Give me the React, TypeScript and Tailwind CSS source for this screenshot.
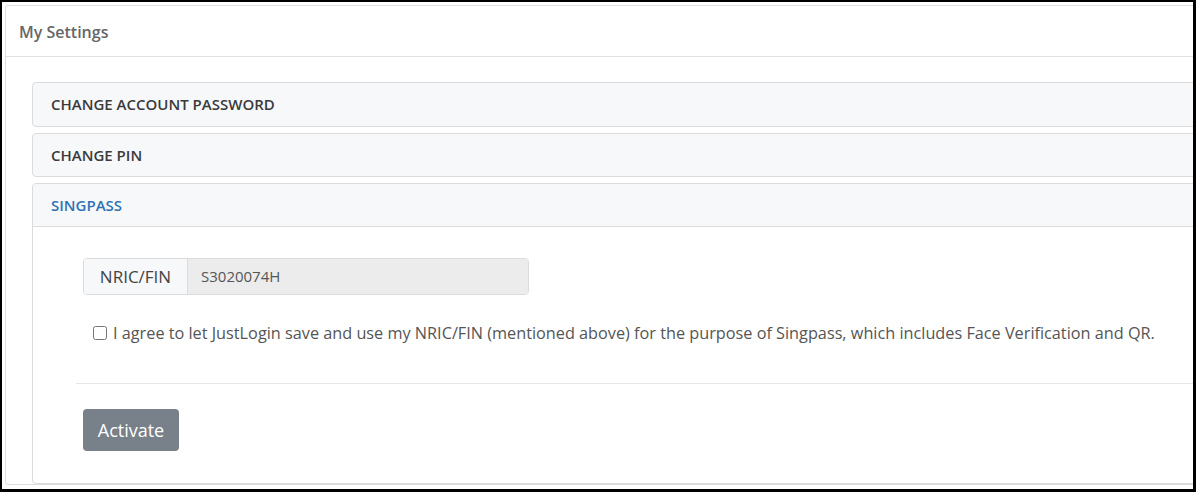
import { useState } from 'react';

const App = () => {
  const [agree, setAgree] = useState(false);

  return (
    <div className="w-[1196px] h-[492px] bg-black pt-[2px] pl-[2px] pr-[3px] pb-[3px] overflow-hidden font-['Open_Sans',sans-serif]">
      <div className="w-full h-full bg-white overflow-hidden pt-[3px] pl-[3px]">
        <div className="w-[1220px] border border-[#dedede] rounded-[3px]">
          <div className="h-[51px] flex items-center pl-[13px] pt-[2px] border-b border-[#e2e2e2] text-[16px] font-semibold text-[#666]">
            My Settings
          </div>
          <div className="pt-[25px] pl-[26px] pr-[26px] flex flex-col">
            <div className="h-[45px] flex items-center pl-[18px] bg-[#f7f8fa] border border-[#dcdcdc] rounded-[4px] text-[15px] font-semibold text-[#3a3a3a]">
              CHANGE ACCOUNT PASSWORD
            </div>
            <div className="mt-[6px] h-[44px] flex items-center pl-[18px] bg-[#f7f8fa] border border-[#dcdcdc] rounded-[4px] text-[15px] font-semibold text-[#3a3a3a]">
              CHANGE PIN
            </div>
            <div className="mt-[6px] border border-[#dcdcdc] rounded-[4px]">
              <div className="h-[43px] flex items-center pl-[18px] bg-[#f7f8fa] border-b border-[#dcdcdc] rounded-t-[4px] text-[15px] font-semibold text-[#2f73b5]">
                SINGPASS
              </div>
              <div className="pt-[31px] pl-[43px] pb-[32px]">
                <div className="pl-[7px]">
                  <div className="flex w-[446px] h-[37px] border border-[#dcdcdc] rounded-[4px] overflow-hidden">
                    <div className="w-[104px] flex items-center justify-center bg-[#f7f8fa] border-r border-[#dcdcdc] text-[17px] text-[#444]">
                      NRIC/FIN
                    </div>
                    <div className="flex-1 flex items-center pl-[13px] bg-[#ececec] text-[15px] text-[#555]">
                      S3020074H
                    </div>
                  </div>
                  <label className="flex items-center mt-[27px] pl-[10px] text-[16.25px] text-[#555] leading-[22px]">
                    <input
                      type="checkbox"
                      checked={agree}
                      onChange={(e) => setAgree(e.target.checked)}
                      className="w-[14px] h-[14px] mr-[6px]"
                    />
                    I agree to let JustLogin save and use my NRIC/FIN (mentioned above) for the purpose of Singpass, which includes Face Verification and QR.
                  </label>
                </div>
                <hr className="mt-[39px] border-t border-[#e6e6e6]" />
                <div className="pl-[7px] pt-[25px]">
                  <button className="w-[96px] h-[42px] bg-[#78808a] text-white text-[18px] rounded-[4px]">
                    Activate
                  </button>
                </div>
              </div>
            </div>
          </div>
        </div>
      </div>
    </div>
  );
};

export default App;
